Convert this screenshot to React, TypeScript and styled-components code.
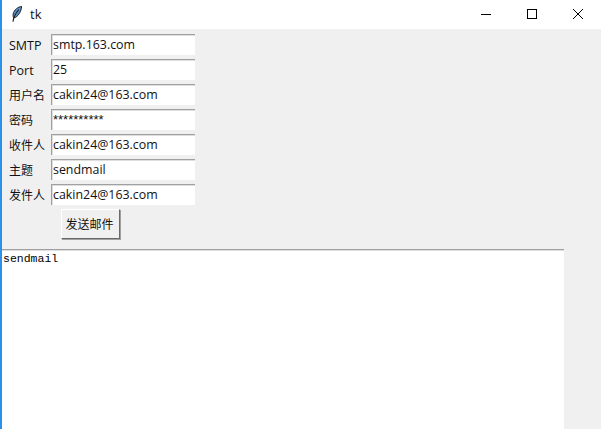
import React, { FunctionComponent } from "react";
import styled, { createGlobalStyle } from "styled-components";

const GlobalStyle = createGlobalStyle`
  html, body {
    margin: 0;
    padding: 0;
    height: 100%;
    overflow: hidden;
    background: #f0f0f0;
  }
`;

const Window = styled.div`
  width: 601px;
  height: 429px;
  box-sizing: border-box;
  border-left: 2px solid #2b90e8;
  display: flex;
  flex-direction: column;
  overflow: hidden;
  background: #f0f0f0;
  font-family: "Open Sans", "Noto Sans CJK SC", sans-serif;
  color: #111;
`;

const TitleBar = styled.div`
  height: 29px;
  box-sizing: border-box;
  flex: none;
  background: #fff;
  display: flex;
  align-items: center;
  padding: 0 0 2px 10px;
`;

const AppName = styled.span`
  font-size: 13px;
  margin-left: 8px;
  flex: 1;
`;

const WindowButton = styled.div`
  width: 46px;
  height: 27px;
  display: flex;
  align-items: center;
  justify-content: center;
`;

const Form = styled.div`
  display: flex;
  flex-direction: column;
  gap: 4px;
  padding: 5px 0 0 7px;
`;

const Row = styled.div`
  display: flex;
  align-items: center;
  height: 21px;
`;

const Label = styled.label<{ $cjk?: boolean }>`
  width: 42px;
  font-size: ${(props) => (props.$cjk ? "12px" : "12.5px")};
  padding-top: 1px;
  white-space: nowrap;
`;

const Entry = styled.div<{ $masked?: boolean }>`
  width: 144px;
  height: 21px;
  box-sizing: border-box;
  background: #fff;
  border-top: 1px solid #a0a0a0;
  border-left: 1px solid #a0a0a0;
  box-shadow: inset 1px 1px 0 #dedede;
  padding-left: 1px;
  font-family: ${(props) => (props.$masked ? '"Liberation Sans", sans-serif' : "inherit")};
  font-size: ${(props) => (props.$masked ? "13px" : "12.4px")};
  line-height: 19px;
  white-space: nowrap;
`;

const SendButton = styled.button`
  align-self: flex-start;
  width: 59px;
  height: 30px;
  margin: 0 0 10px 52px;
  padding: 0 2px 0 0;
  box-sizing: border-box;
  background: #f0f0f0;
  border: 1px solid;
  border-color: #fff #6a6a6a #6a6a6a #fff;
  box-shadow: 1px 1px 0 #a0a0a0;
  font-family: inherit;
  font-size: 12px;
  color: #111;
`;

const Output = styled.div`
  width: 562px;
  flex: 1;
  box-sizing: border-box;
  background: #fff;
  border-top: 1px solid #a0a0a0;
  box-shadow: inset 0 1px 0 #dedede;
  padding: 2px 0 0 1px;
  font-family: "Liberation Mono", monospace;
  font-size: 11.5px;
  line-height: 14px;
  color: #000;
`;

const fields = [
  { label: "SMTP", value: "smtp.163.com" },
  { label: "Port", value: "25" },
  { label: "用户名", value: "cakin24@163.com", cjk: true },
  { label: "密码", value: "**********", cjk: true, masked: true },
  { label: "收件人", value: "cakin24@163.com", cjk: true },
  { label: "主题", value: "sendmail", cjk: true },
  { label: "发件人", value: "cakin24@163.com", cjk: true },
];

const Feather: FunctionComponent = () => (
  <svg width="10" height="16" viewBox="0 0 10 16">
    <path d="M9.7 0.4C6 0.8 1.8 4 1.2 8c-.3 1.8 0 3.2.6 4C6 11 9.2 5.5 9.7 0.4z" fill="#5f8fc4" stroke="#16212e" strokeWidth="1" />
    <path d="M1 15.7C1.6 11 3.8 7 6.8 3.5" fill="none" stroke="#10161f" strokeWidth="1.1" />
  </svg>
);

const App: FunctionComponent = () => (
  <Window>
    <GlobalStyle />
    <TitleBar>
      <Feather />
      <AppName>tk</AppName>
      <WindowButton>
        <svg width="10" height="10" viewBox="0 0 10 10">
          <path d="M0 5.5h10" stroke="#000" strokeWidth="1" />
        </svg>
      </WindowButton>
      <WindowButton>
        <svg width="10" height="10" viewBox="0 0 10 10">
          <rect x="0.5" y="0.5" width="9" height="9" fill="none" stroke="#000" />
        </svg>
      </WindowButton>
      <WindowButton>
        <svg width="10" height="10" viewBox="0 0 10 10">
          <path d="M0 0l10 10M10 0L0 10" stroke="#000" strokeWidth="1" />
        </svg>
      </WindowButton>
    </TitleBar>
    <Form>
      {fields.map((field) => (
        <Row key={field.label}>
          <Label $cjk={field.cjk}>{field.label}</Label>
          <Entry $masked={field.masked}>{field.value}</Entry>
        </Row>
      ))}
      <SendButton>发送邮件</SendButton>
    </Form>
    <Output>sendmail</Output>
  </Window>
);

export default App;
